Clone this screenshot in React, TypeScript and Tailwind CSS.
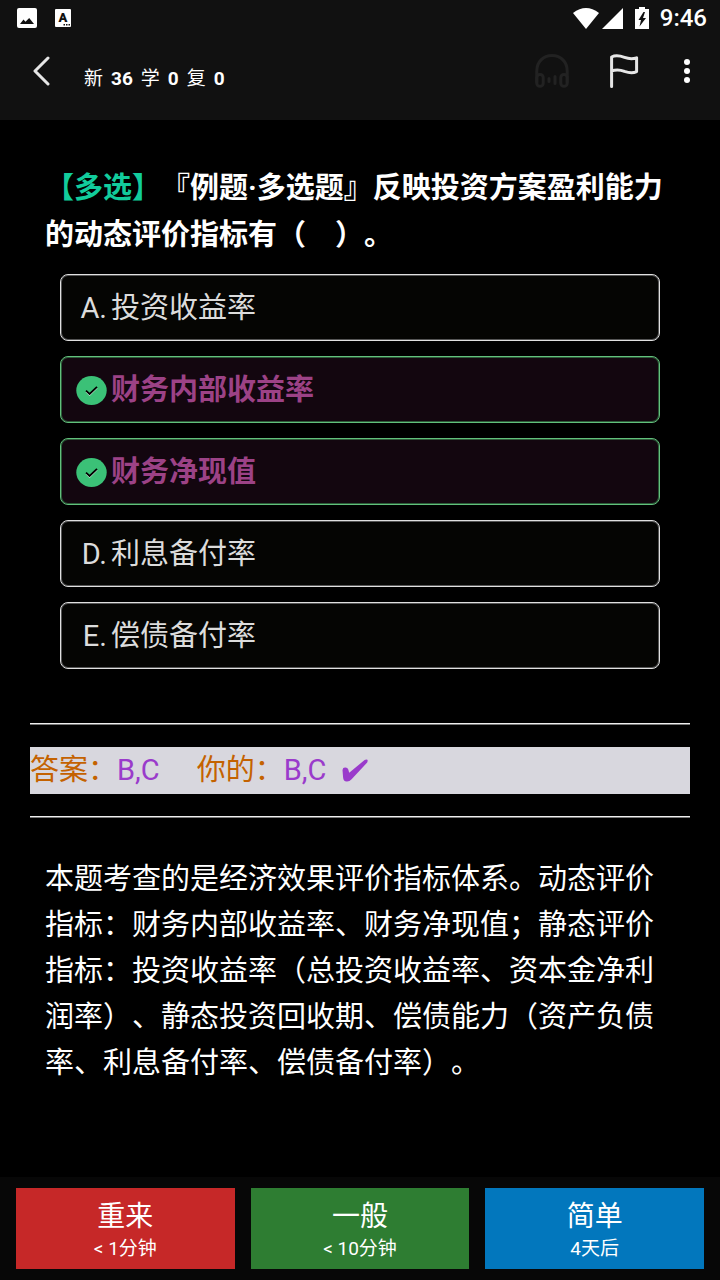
import React, { useState } from 'react';
import clsx from 'clsx';

type Option = { key: string; text: string; correct: boolean };

const options: Option[] = [
  { key: 'A', text: '投资收益率', correct: false },
  { key: 'B', text: '财务内部收益率', correct: true },
  { key: 'C', text: '财务净现值', correct: true },
  { key: 'D', text: '利息备付率', correct: false },
  { key: 'E', text: '偿债备付率', correct: false },
];

const counts = [
  { label: '新', value: 36 },
  { label: '学', value: 0 },
  { label: '复', value: 0 },
];

const grades = [
  { title: '重来', due: '< 1分钟', cls: 'bg-[#c62828]' },
  { title: '一般', due: '< 10分钟', cls: 'bg-[#2e7d32]' },
  { title: '简单', due: '4天后', cls: 'bg-[#0277bd]' },
];

function StatusBar() {
  return (
    <div className="flex h-9 items-center justify-between pl-[17px] pr-[13px]">
      <div className="flex items-center gap-[18px]">
        <svg width="20" height="20" viewBox="0 0 20 20" aria-hidden="true">
          <rect width="20" height="20" rx="2" fill="#fff" />
          <path d="M3 16 L6.5 11.5 L8.5 13.8 L12.2 10 L17 16 Z" fill="#111" />
        </svg>
        <svg width="16" height="18" viewBox="0 0 16 18" aria-hidden="true">
          <rect width="16" height="18" rx="1" fill="#fff" />
          <text x="8" y="13" textAnchor="middle" fontFamily="Roboto, sans-serif" fontSize="13" fontWeight="900" fill="#111">A</text>
          <path d="M8.5 15h1.5v1.5H8.5zM11 15h1.5v1.5H11zM13.5 15H15v1.5h-1.5z" fill="#111" />
        </svg>
      </div>
      <div className="flex items-center">
        <svg width="26" height="21" viewBox="0 0 26 21" className="mr-[3px]" aria-hidden="true">
          <path d="M0 5 Q13 -5 26 5 L13 21 Z" fill="#fff" />
        </svg>
        <svg width="21" height="21" viewBox="0 0 21 21" className="mr-3" aria-hidden="true">
          <path d="M21 0 V21 H0 Z" fill="#fff" />
        </svg>
        <svg width="14" height="22" viewBox="0 0 14 22" className="mr-[11px]" aria-hidden="true">
          <path d="M4 0h6v2h4v20H0V2h4z" fill="#fff" />
          <path d="M8.5 5 3.5 13H6L4.5 19.5 11 11H8L10 5Z" fill="#111" />
        </svg>
        <span className="text-[24px] font-medium leading-9">9:46</span>
      </div>
    </div>
  );
}

function Toolbar() {
  return (
    <div className="flex h-[84px] items-center pl-[33px] pr-[30px]">
      <button type="button" aria-label="返回" className="mb-[14px] mr-[33px]">
        <svg width="18" height="30" viewBox="0 0 18 30" fill="none" stroke="#e6e6e6" strokeWidth="3" strokeLinecap="round" strokeLinejoin="round">
          <path d="M15 2 L2 15 L15 28" />
        </svg>
      </button>
      <div className="flex flex-1 gap-2 pt-0.5 text-[19px] leading-7">
        {counts.map(c => (
          <React.Fragment key={c.label}>
            <span>{c.label}</span>
            <span className="font-bold">{c.value}</span>
          </React.Fragment>
        ))}
      </div>
      <div className="mb-[14px] flex items-center">
        <button type="button" aria-label="朗读" className="mr-10">
          <svg width="34" height="34" viewBox="0 0 34 34" fill="none" stroke="#222" strokeWidth="3" strokeLinecap="round">
            <path d="M1.8 28 V17 C1.8 8 8 1.6 17 1.6 C26 1.6 32.2 8 32.2 17 V28" />
            <rect x="1.8" y="20.5" width="6.4" height="11.8" rx="3" />
            <rect x="25.8" y="20.5" width="6.4" height="11.8" rx="3" />
            <path d="M14 24.5 V27.5 M20 22.5 V29.5" />
          </svg>
        </button>
        <button type="button" aria-label="标记" className="mr-[45px]">
          <svg width="30" height="34" viewBox="0 0 30 34" fill="none" stroke="#e6e6e6" strokeWidth="3" strokeLinecap="round" strokeLinejoin="round">
            <path d="M2.6 32.4 V3 C7 0.8 11 1.8 15.5 3.4 C20 5 24 5 27.6 3.8 V17.6 C24 19.4 20 19 15.5 17.4 C11 15.6 7 15.6 2.6 16.8" />
          </svg>
        </button>
        <button type="button" aria-label="更多">
          <svg width="6" height="26" viewBox="0 0 6 26" fill="#fff">
            <circle cx="3" cy="4" r="3" />
            <circle cx="3" cy="13" r="3" />
            <circle cx="3" cy="22" r="3" />
          </svg>
        </button>
      </div>
    </div>
  );
}

function CheckBadge() {
  return (
    <svg width="31" height="29" viewBox="0 0 31 29" aria-hidden="true">
      <ellipse cx="15.5" cy="14.5" rx="15.2" ry="14.4" fill="#3bc177" />
      <path d="M10 15.6 L13.6 19 L21 11.8" fill="none" stroke="#d5f2e1" strokeWidth="1.4" />
      <path d="M10 14.6 L13.6 18 L21 10.8" fill="none" stroke="#000" strokeWidth="1.8" />
    </svg>
  );
}

function OptionRow({ option, checked, onToggle }: { option: Option; checked: boolean; onToggle: () => void }) {
  return (
    <label
      className={clsx(
        'relative flex h-[67px] cursor-pointer items-center gap-1 rounded-lg border pl-[15px] pt-0.5 text-[29px]',
        option.correct
          ? 'border-[#62c07c] bg-[#13060f] font-bold text-[#9c4286] shadow-[inset_0_0_0_1px_#2c5a38]'
          : 'border-[#e0e0e0] bg-[#050503] text-[#dcdcdc] shadow-[inset_0_0_0_1px_#555555]'
      )}
    >
      <input type="checkbox" checked={checked} onChange={onToggle} className="sr-only" />
      <span className="flex w-[31px] justify-end">{option.correct ? <CheckBadge /> : `${option.key}.`}</span>
      <span>{option.text}</span>
    </label>
  );
}

export default function App() {
  const [picked, setPicked] = useState<string[]>(['B', 'C']);

  function toggle(key: string) {
    setPicked(prev => (prev.includes(key) ? prev.filter(k => k !== key) : [...prev, key].sort()));
  }

  const answer = options.filter(o => o.correct).map(o => o.key).join(',');
  const mine = picked.join(',');

  return (
    <div lang="zh-CN" className="flex min-h-screen flex-col bg-black font-['Roboto','Noto_Sans_CJK_SC',sans-serif] text-white [text-spacing-trim:space-all]">
      <header className="bg-[#111111]">
        <StatusBar />
        <Toolbar />
      </header>

      <main className="flex-1 px-[30px] pt-[45px]">
        <h1 className="px-[15px] text-[29px] font-bold leading-[47px]">
          <span className="text-[#12cc9c]">【多选】</span>『例题·多选题』反映投资方案盈利能力的动态评价指标有（　）。
        </h1>

        <div className="mt-[15px] flex flex-col gap-[15px] px-[30px]">
          {options.map(o => (
            <OptionRow key={o.key} option={o} checked={picked.includes(o.key)} onToggle={() => toggle(o.key)} />
          ))}
        </div>

        <hr className="mt-[54px] h-[2px] border-b border-t border-b-[#777777] border-t-[#eeeeee]" />
        <p className="my-[22px] flex items-center bg-[#d8d7de] text-[29px] leading-[47px] text-[#c46200]">
          <span>答案：</span>
          <span className="mr-[37px] text-[#9a3bcb]">{answer}</span>
          <span>你的：</span>
          <span className="text-[#9a3bcb]">{mine}</span>
          {mine === answer && (
            <svg width="26" height="23" viewBox="0 0 26 23" className="ml-4" role="img" aria-label="正确">
              <path d="M0.5 11 Q0.8 8.6 3 8.6 Q5.6 8.4 6.3 10.4 L7.2 13.8 L22.6 1 Q24.2 0 25.4 0.8 Q26 2 25.2 3.4 L9.6 20.2 Q7.4 22.6 4.6 22.4 Q1.4 22.2 1.1 18.4 Z" fill="#9a3bcb" />
            </svg>
          )}
        </p>
        <hr className="h-[2px] border-b border-t border-b-[#777777] border-t-[#eeeeee]" />

        <p className="mt-[38px] px-[15px] pb-10 text-[29px] leading-[46px]">
          本题考查的是经济效果评价指标体系。动态评价指标：财务内部收益率、财务净现值；静态评价指标：投资收益率（总投资收益率、资本金净利润率）、静态投资回收期、偿债能力（资产负债率、利息备付率、偿债备付率）。
        </p>
      </main>

      <footer className="grid grid-cols-3 gap-4 bg-[#070707] px-4 py-[11px]">
        {grades.map(g => (
          <button key={g.title} type="button" className={clsx('flex h-[81px] flex-col items-center justify-center pt-1', g.cls)}>
            <span className="text-[28px] leading-9">{g.title}</span>
            <span className="text-[19px] leading-7">{g.due}</span>
          </button>
        ))}
      </footer>
    </div>
  );
}
